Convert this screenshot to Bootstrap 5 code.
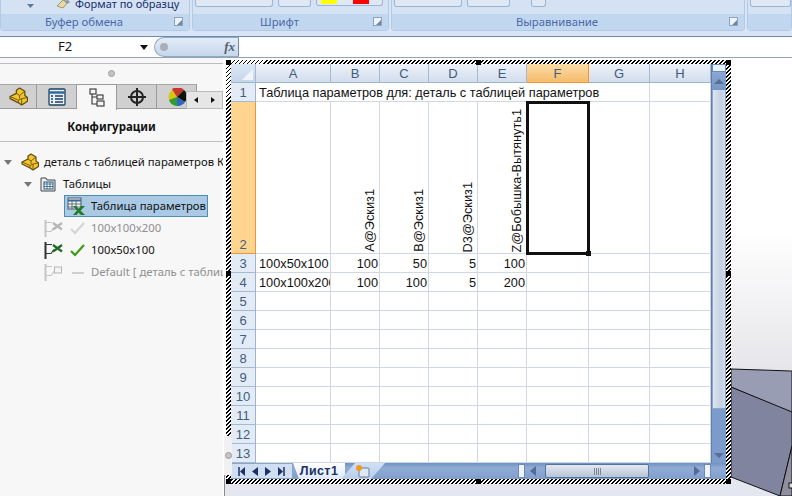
<!DOCTYPE html>
<html lang="ru">

<head>
    <meta charset="UTF-8">
    <meta name="viewport" content="width=device-width, initial-scale=1.0">
    <title>Таблица параметров</title>
    <link href="https://cdn.jsdelivr.net/npm/bootstrap@5.3.0/dist/css/bootstrap.min.css" rel="stylesheet">
    <style>
        html, body { width: 792px; height: 496px; overflow: hidden; }
        body { font-family: "Noto Sans", "Liberation Sans", sans-serif; font-size: 11.3px; color: #111; background: #fff; }

        /* ribbon */
        .rb-bar { height: 37px; background: #d6e4f5; border-bottom: 1px solid #6d8cab; }
        .rb-group { height: 31px; margin-right: 2px; background: #d4e2f4; border: 1px solid #b3cae4; border-top: 0; border-radius: 0 0 4px 4px; }
        .rb-top { height: 14px; gap: 5px; padding-left: 2px; }
        .rb-btn { height: 7px; background: #dfe9f6; border: 1px solid #9db5d2; border-top: 0; border-radius: 0 0 3px 3px; }
        .rb-label { height: 16px; background: #c1d7ef; color: #4a68a8; font-size: 11.3px; line-height: 16px; text-align: center; padding-right: 22px; }
        .rb-launch { right: 6px; top: 3px; width: 9px; height: 9px; border: 1px solid #8ea3bd; background: #eef3fa; }
        .rb-launch::after { content: ""; position: absolute; right: 0; bottom: 0; width: 5px; height: 5px; background: #6f88a8; clip-path: polygon(100% 0, 100% 100%, 0 100%); }
        .rb-brush { font-size: 11px; color: #16306e; line-height: 8px; white-space: nowrap; }
        .swatch-y { width: 16px; height: 4px; background: #ff0; }
        .swatch-r { width: 16px; height: 4px; background: #f00; }

        /* formula bar */
        .fx-bar { height: 21px; background: #fff; border-bottom: 1px solid #93a3b3; }
        .fx-name { width: 154px; font-size: 13px; }
        .fx-name span { margin-left: 58px; }
        .fx-drop { width: 0; height: 0; border: 4px solid transparent; border-top: 5px solid #111; border-bottom: 0; margin-left: 68px; }
        .fx-pill { width: 85px; background: linear-gradient(#e4ecf7, #c5d6ec); border: 1px solid #8ea9c9; border-right: 1px solid #6f8aaa; border-radius: 10px 0 0 10px; }
        .fx-dot { width: 8px; height: 8px; margin-left: 5px; border-radius: 50%; background: #a9afb8; }
        .fx-sign { margin-left: auto; margin-right: 3px; font: italic bold 13px "Liberation Serif", serif; color: #53606e; }

        /* left panel */
        .main-row { height: 438px; }
        .side-panel { width: 223px; background: #f7f7f7; }
        .side-top { height: 5px; border-bottom: 1px solid #bdbdbd; box-sizing: content-box; }
        .side-grip { height: 19px; }
        .grip-dot { width: 7px; height: 7px; border-radius: 50%; background: #c4c4c4; border: 1px solid #9d9d9d; }
        .tab-strip { height: 25px; border-bottom: 1px solid #9a9a9a; margin-top: 1px; }
        .tab-item { width: 40px; background: #d0d0d0; border-right: 1px solid #9a9a9a; border-top: 1px solid #a8a8a8; }
        .tab-item.tab-on { background: #f7f7f7; border-top-color: #9a9a9a; height: 26px; }
        .tab-more { right: 0; top: 7px; width: 37px; height: 18px; background: #e6e6e6; border: 1px solid #bbb; }
        .tab-more span { width: 0; height: 0; border: 3px solid transparent; }
        .tab-more .arr-l { border-right: 4px solid #111; border-left: 0; }
        .tab-more .arr-r { border-left: 4px solid #111; border-right: 0; }
        .side-title { height: 32px; line-height: 36px; font-weight: 700; text-align: center; border-bottom: 1px solid #bdbdbd; box-sizing: content-box; font-size: 11.5px; }
        .tree-list { padding-top: 9px; }
        .tree-row { height: 22px; white-space: nowrap; overflow: hidden; }
        .tree-row svg, .tree-sel svg { flex-shrink: 0; }
        .tree-tri { width: 0; height: 0; flex-shrink: 0; border: 4px solid transparent; border-top: 5px solid #777; border-bottom: 0; }
        .tree-off { color: #8f8f8f; }
        .tree-sel { background: #a9c9e4; border: 1px solid #4d8db8; height: 22px; width: 144px; margin-left: 64px; white-space: nowrap; }
        .tree-cfg { margin-left: 44px; }
        .cfg-off { color: #c4c4c4; }
        .cfg-on { color: #333; }
        .tree-gap { margin-left: 7px; }

        /* excel object */
        .work-area { flex: 1; background: #fff; }
        .work-foot { left: 1px; right: 0; bottom: 0; height: 22px; background: #e4e7f0; border-left: 1px solid #8a8a8a; }
        .ole-box { position: absolute; left: 3px; top: 2px; width: 505px; height: 424px; padding: 4px 5px 5px; background: repeating-linear-gradient(135deg, #000 0 1.4px, #fff 1.4px 2.83px); }
        .ole-handle { width: 5px; height: 5px; background: #000; }
        .ole-grip { left: 1px; top: 378px; width: 8px; height: 39px; background: #f1f1f1; border-radius: 0 2px 2px 0; }
        .xl-inner { height: 415px; background: #fff; }
        .xl-grid { width: 480px; height: 399px; }
        .xl-sheet { table-layout: fixed; width: 480px; border-collapse: separate; border-spacing: 0; font-family: "Liberation Sans", sans-serif; font-size: 12.75px; color: #111; }
        .xl-sheet > :not(caption) > * > * { padding: 2px 1px 0 3px; border: 0; border-right: 1px solid #d0d7e5; border-bottom: 1px solid #d0d7e5; height: 19px; line-height: 16px; overflow: hidden; white-space: nowrap; box-shadow: none; }
        .xl-sheet > :not(caption) > * > .xl-hd { background: linear-gradient(#eef2f8, #d2dded); border-right-color: #a4bad2; border-bottom-color: #9db4cd; color: #3f5d7d; text-align: center; padding: 2px 0 0; line-height: 16px; font-size: 13px; }
        .xl-sheet > :not(caption) > * > .xl-rw { background: #e3ebf6; border-right-color: #9db4cd; border-bottom-color: #a4bad2; color: #3f5d7d; text-align: center; padding: 2px 0 0; font-size: 13px; }
        .xl-sheet > :not(caption) > * > .xl-hd-on { background: linear-gradient(#f9dba6, #f6bc6c); border-right-color: #f29536; border-bottom-color: #f29536; }
        .xl-sheet > :not(caption) > * > .xl-rw-on { background: #ffd48f; border-right-color: #f29536; border-bottom-color: #f29536; vertical-align: bottom; }
        .xl-sheet > :not(caption) > * > .xl-corner { background: linear-gradient(#dbe6f4, #c5d6ea); position: relative; }
        .corner-tri { right: 2px; bottom: 2px; width: 0; height: 0; border-left: 11px solid transparent; border-bottom: 11px solid #f1f5fb; }
        .xl-sheet > :not(caption) > .row-tall > * { height: 152px; vertical-align: bottom; }
        .xl-sheet > :not(caption) > * > .xl-cur { position: relative; outline: 3px solid #111; outline-offset: -2px; overflow: visible; }
        .cur-fill { right: -3px; bottom: -3px; width: 5px; height: 5px; background: #111; z-index: 2; }
        .xl-vert { display: block; margin-left: auto; margin-right: 1px; width: 15px; writing-mode: vertical-rl; transform: rotate(180deg); line-height: 15px; padding-top: 1px; }

        /* scrollbars */
        .xl-vbar { width: 15px; height: 399px; background: #7b9ccb; border-left: 1px solid #5d7eae; }
        .vbar-split { height: 8px; background: #e9f0f9; border: 1px solid #6c8cb8; }
        .vbar-up { height: 18px; background: linear-gradient(#8aa8d2, #7496c6); }
        .vbar-up i, .vbar-dn i { width: 0; height: 0; border: 5px solid transparent; }
        .vbar-up i { border-bottom: 5px solid #5b6d94; border-top: 0; }
        .vbar-dn i { border-top: 5px solid #5b6d94; border-bottom: 0; }
        .vbar-thumb { height: 319px; background: linear-gradient(90deg, #dde5ef, #c3cfe1 70%, #d3dce9); border: 1px solid #8fa6c4; border-top: 0; }
        .vbar-dn { height: 54px; padding-bottom: 5px; }
        .xl-hbar { height: 16px; background: linear-gradient(#6e90c2, #90acd4 30%, #7f9fcb); }
        .sheet-nav { width: 62px; gap: 7px; background: #cfdef2; border: 1px solid #8ba5c5; border-left: 0; }
        .sheet-nav svg { display: block; }
        .sheet-tab { width: 52px; background: linear-gradient(#fff, #dce8f7); color: #1c3263; font: 700 12.5px "Liberation Sans", sans-serif; letter-spacing: .4px; clip-path: polygon(0 0, 100% 0, 100% 100%, 6px 100%); }
        .sheet-new { width: 44px; margin-left: -4px; background: linear-gradient(#cfe0f5, #b7cee9); clip-path: polygon(14px 0, 100% 0, calc(100% - 14px) 100%, 0 100%); }
        .hbar-fill { width: 133px; }
        .hbar-split { width: 7px; height: 14px; background: #eef3fa; border: 1px solid #6c8cb8; }
        .hbar-thumb { width: 104px; height: 14px; gap: 1px; background: linear-gradient(#e3e9f1, #b8c5d6); border: 1px solid #53749f; border-radius: 2px; }
        .hbar-thumb i { width: 1px; height: 7px; background: #7a8794; }
        .hbar-arr { width: 0; height: 0; border: 5px solid transparent; }
        .hbar-l { border-right: 6px solid #56699a; border-left: 0; margin: 0 9px 0 5px; }
        .hbar-r { border-left: 6px solid #56699a; border-right: 0; margin: 0 4px 0 45px; }
        .view-3d { right: 0; top: 0; }
    </style>
</head>

<body>
    <svg width="0" height="0" class="d-block">
        <symbol id="part" viewBox="0 0 18 18">
            <path d="M1 9 7 6V3l3-2 5 3v4l2.500 2v3.500L12 17l-3-2-8-4z" fill="#f3c52b" stroke="#5d4a12" stroke-width="1.200" stroke-linejoin="round"/>
            <path d="M7 6l3 2 5-4M10 8v3M1 9l8 3.500V15M9 12.500l3-1.500 5.500-1M12 11v6" fill="none" stroke="#6e5612" stroke-width=".9"/>
        </symbol>
        <symbol id="cfg" viewBox="0 0 19 19">
            <path d="M1.500 1v17" fill="none" stroke="currentColor" stroke-width="2"/>
            <path d="M2 3.500h6M2 12.500h5l3-4" fill="none" stroke="currentColor" stroke-width="1.100"/>
        </symbol>
    </svg>

    <div class="rb-bar d-flex">
        <div class="rb-group" style="width:190px">
            <div class="rb-top d-flex position-relative">
                <svg width="8" height="5" class="ms-4 mt-1"><path d="M0 0h7L3.500 4z" fill="#5b7aa8"/></svg>
                <svg width="14" height="10" class="ms-3"><path d="M1 6l6-6 5 2-5 6z" fill="#e9d9a3" stroke="#8a7a40" stroke-width=".7"/><path d="M8 1l4-1 2 2-3 2z" fill="#8d96a4"/></svg>
                <span class="rb-brush">Формат по образцу</span>
            </div>
            <div class="rb-label position-relative">Буфер обмена<span class="rb-launch position-absolute"></span></div>
        </div>
        <div class="rb-group" style="width:197px">
            <div class="rb-top d-flex">
                <span class="rb-btn" style="width:78px"></span>
                <span class="rb-btn" style="width:33px"></span>
                <span class="rb-btn d-flex ps-1 gap-3" style="width:67px;height:6px"><i class="swatch-y"></i><i class="swatch-r"></i></span>
            </div>
            <div class="rb-label position-relative">Шрифт<span class="rb-launch position-absolute"></span></div>
        </div>
        <div class="rb-group" style="width:354px">
            <div class="rb-top d-flex">
                <span class="rb-btn" style="width:68px"></span>
                <span class="rb-btn" style="width:43px"></span>
                <span class="rb-btn ms-3" style="width:15px"></span>
            </div>
            <div class="rb-label position-relative">Выравнивание<span class="rb-launch position-absolute"></span></div>
        </div>
        <div class="rb-group flex-grow-1 me-0">
            <div class="rb-top d-flex"><span class="rb-btn w-100"></span></div>
            <div class="rb-label"></div>
        </div>
    </div>

    <div class="fx-bar d-flex">
        <div class="fx-name d-flex align-items-center"><span>F2</span><i class="fx-drop"></i></div>
        <div class="fx-pill d-flex align-items-center"><i class="fx-dot"></i><span class="fx-sign">fx</span></div>
    </div>

    <div class="main-row d-flex">
        <div class="side-panel flex-shrink-0">
            <div class="side-top"></div>
            <div class="side-grip d-flex align-items-center justify-content-center"><i class="grip-dot"></i></div>
            <div class="tab-strip d-flex position-relative">
                <div class="tab-item d-flex align-items-center justify-content-center" style="width:37px">
                    <svg width="19" height="19"><use href="#part"/></svg>
                </div>
                <div class="tab-item d-flex align-items-center justify-content-center">
                    <svg width="18" height="18" viewBox="0 0 18 18"><rect x="1" y="1" width="16" height="16" rx="1" fill="#eaf1f8" stroke="#1d4263" stroke-width="1.3"/><path d="M1 4.500h16" stroke="#2f6a9c" stroke-width="2.500"/><path d="M3 8h2M7 8h8M3 11h2M7 11h8M3 14h2M7 14h8" stroke="#1d4263" stroke-width="1.300"/></svg>
                </div>
                <div class="tab-item tab-on d-flex align-items-center justify-content-center">
                    <svg width="16" height="19" viewBox="0 0 16 19"><g fill="#f4f4f4" stroke="#333" stroke-width="1.100"><rect x="1" y="1" width="6" height="5"/><rect x="8" y="7" width="6" height="4"/><rect x="8" y="13" width="7" height="5"/><path d="M3 6v10h5M3 9h5" fill="none"/></g></svg>
                </div>
                <div class="tab-item d-flex align-items-center justify-content-center">
                    <svg width="18" height="18" viewBox="0 0 18 18" fill="none" stroke="#222" stroke-width="2"><circle cx="9" cy="9" r="6"/><path d="M9 0v18M0 9h18"/></svg>
                </div>
                <div class="tab-item d-flex align-items-center justify-content-center">
                    <svg width="18" height="18" viewBox="0 0 18 18"><circle cx="9" cy="9" r="8.500" fill="#d7c21a"/><path d="M9 9 4 1a9 9 0 0 1 12 1z" fill="#c8352a"/><path d="M9 9l7-7a9 9 0 0 1 1 12z" fill="#111"/><path d="M9 9 1 12a9 9 0 0 0 8 6z" fill="#2e9b35"/><path d="M9 9l8 5a9 9 0 0 1-8 4z" fill="#2f68c4"/></svg>
                </div>
                <div class="tab-more position-absolute d-flex align-items-center justify-content-around"><span class="arr-l"></span><span class="arr-r"></span></div>
            </div>
            <div class="side-title">Конфигурации</div>
            <div class="tree-list">
                <div class="tree-row d-flex align-items-center">
                    <i class="tree-tri ms-1"></i>
                    <svg width="18" height="18" style="margin-left:9px"><use href="#part"/></svg>
                    <span style="margin-left:5px">деталь с таблицей параметров К</span>
                </div>
                <div class="tree-row d-flex align-items-center">
                    <i class="tree-tri" style="margin-left:24px"></i>
                    <svg width="16" height="16" viewBox="0 0 16 16" class="ms-2"><path d="M1 2h5l1 2h8v11H1z" fill="#eee" stroke="#444"/><rect x="4" y="6" width="9" height="7" fill="#fff" stroke="#245a85"/><path d="M4 8h9M7 6v7M10 6v7M4 10.500h9" stroke="#245a85" stroke-width=".8"/></svg>
                    <span style="margin-left:7px">Таблицы</span>
                </div>
                <div class="d-flex align-items-center tree-sel">
                    <svg width="20" height="19" viewBox="0 0 20 19" style="margin-left:2px"><rect x="1" y="1" width="13" height="11" fill="#eef2f6" stroke="#4d5964"/><path d="M1 3.500h13" stroke="#3a6b96" stroke-width="2"/><path d="M1 7h13M1 10h13M5 4v8M9 4v8" stroke="#4d5964" stroke-width=".8"/><path d="M6 9h3.500l2 3 2.500-3h4l-4.500 4.500L18 18h-4l-2.500-2.500L9.500 18H6l4-4.500z" fill="#1e7d24"/></svg>
                    <span class="ms-1">Таблица параметров</span>
                </div>
                <div class="tree-row d-flex align-items-center tree-off">
                    <svg width="19" height="19" class="tree-cfg cfg-off"><use href="#cfg"/><path d="M9 4l9 6.500M18 4 9 10.500" stroke="#b5b5b5" stroke-width="2.200"/></svg>
                    <svg width="15" height="13" class="tree-gap" viewBox="0 0 15 13"><path d="M1 7l4 4 9-10" fill="none" stroke="#d4d4d4" stroke-width="2.200"/></svg>
                    <span style="margin-left:6px">100x100x200</span>
                </div>
                <div class="tree-row d-flex align-items-center">
                    <svg width="19" height="19" class="tree-cfg cfg-on"><use href="#cfg"/><path d="M9 4l9 6.500M18 4 9 10.500" stroke="#1f6a24" stroke-width="2.200"/></svg>
                    <svg width="15" height="13" class="tree-gap" viewBox="0 0 15 13"><path d="M1 7l4 4 9-10" fill="none" stroke="#3d9a1f" stroke-width="2.200"/></svg>
                    <span style="margin-left:6px">100x50x100</span>
                </div>
                <div class="tree-row d-flex align-items-center tree-off">
                    <svg width="19" height="19" class="tree-cfg cfg-off"><use href="#cfg"/><rect x="10.500" y="4" width="7" height="6" fill="#f4f4f4" stroke="#b5b5b5"/></svg>
                    <svg width="15" height="13" class="tree-gap" viewBox="0 0 15 13"><path d="M2 7h12" stroke="#cfcfcf" stroke-width="2"/></svg>
                    <span style="margin-left:6px">Default [ деталь с таблиц</span>
                </div>
            </div>
        </div>

        <div class="work-area position-relative">
            <div class="work-foot position-absolute"></div>
            <svg class="view-3d position-absolute" width="61" height="438" viewBox="-2 0 61 438">
                <defs><linearGradient id="vg" x1="0" y1="0" x2="0" y2="1"><stop offset=".55" stop-color="#fff"/><stop offset="1" stop-color="#e6e6ea"/></linearGradient></defs>
                <rect x="-2" width="61" height="312" fill="url(#vg)"/>
                <path d="M-2 419 47 438H-2z" fill="#e4e7f0"/>
                <path d="M-2 311 59 313V355L-2 329z" fill="#999db3" stroke="#111"/>
                <path d="M-2 329 59 354V388L47 438-2 419z" fill="#81849e" stroke="#111"/>
                <path d="M59 388 47 438H59z" fill="#8f8f9f" stroke="#111"/>
                <rect x="56" y="425" width="4" height="5" fill="#ddd" stroke="#111"/>
            </svg>

            <div class="ole-box">
                <div class="xl-inner">
                    <div class="d-flex">
                        <div class="xl-grid">
                            <table class="table mb-0 xl-sheet">
                                <colgroup>
                                    <col style="width:25px"><col style="width:75px"><col style="width:49px"><col style="width:49px"><col style="width:49px"><col style="width:49px"><col style="width:62px"><col style="width:61px"><col style="width:61px">
                                </colgroup>
                                <thead>
                                    <tr>
                                        <th class="xl-hd xl-corner fw-normal"><i class="corner-tri position-absolute"></i></th>
                                        <th class="xl-hd fw-normal">A</th>
                                        <th class="xl-hd fw-normal">B</th>
                                        <th class="xl-hd fw-normal">C</th>
                                        <th class="xl-hd fw-normal">D</th>
                                        <th class="xl-hd fw-normal">E</th>
                                        <th class="xl-hd xl-hd-on fw-normal">F</th>
                                        <th class="xl-hd fw-normal">G</th>
                                        <th class="xl-hd fw-normal">H</th>
                                    </tr>
                                </thead>
                                <tbody id="sheetBody">
                                    <tr>
                                        <td class="xl-rw">1</td>
                                        <td colspan="7">Таблица параметров для: деталь с таблицей параметров</td>
                                        <td></td>
                                    </tr>
                                    <tr class="row-tall">
                                        <td class="xl-rw xl-rw-on">2</td>
                                        <td></td>
                                        <td><span class="xl-vert">A@Эскиз1</span></td>
                                        <td><span class="xl-vert">B@Эскиз1</span></td>
                                        <td><span class="xl-vert">D3@Эскиз1</span></td>
                                        <td><span class="xl-vert">Z@Бобышка-Вытянуть1</span></td>
                                        <td class="xl-cur"><i class="cur-fill position-absolute"></i></td>
                                        <td></td>
                                        <td></td>
                                    </tr>
                                    <tr>
                                        <td class="xl-rw">3</td>
                                        <td>100x50x100</td>
                                        <td class="text-end">100</td>
                                        <td class="text-end">50</td>
                                        <td class="text-end">5</td>
                                        <td class="text-end">100</td>
                                        <td></td><td></td><td></td>
                                    </tr>
                                    <tr>
                                        <td class="xl-rw">4</td>
                                        <td>100x100x200</td>
                                        <td class="text-end">100</td>
                                        <td class="text-end">100</td>
                                        <td class="text-end">5</td>
                                        <td class="text-end">200</td>
                                        <td></td><td></td><td></td>
                                    </tr>
                                </tbody>
                            </table>
                        </div>
                        <div class="xl-vbar">
                            <div class="vbar-split"></div>
                            <div class="vbar-up d-flex align-items-center justify-content-center"><i></i></div>
                            <div class="vbar-thumb"></div>
                            <div class="vbar-dn d-flex align-items-end justify-content-center"><i></i></div>
                        </div>
                    </div>
                    <div class="xl-hbar d-flex align-items-center">
                        <div class="sheet-nav d-flex align-items-center justify-content-center h-100">
                            <svg width="7" height="9"><path d="M1 0v9" stroke="#1c3263" stroke-width="1.500"/><path d="M7 0v9L2 4.500z" fill="#1c3263"/></svg>
                            <svg width="6" height="9"><path d="M6 0v9L0 4.500z" fill="#1c3263"/></svg>
                            <svg width="6" height="9"><path d="M0 0v9l6-4.500z" fill="#1c3263"/></svg>
                            <svg width="7" height="9"><path d="M0 0v9l5-4.500z" fill="#1c3263"/><path d="M6 0v9" stroke="#1c3263" stroke-width="1.500"/></svg>
                        </div>
                        <div class="sheet-tab d-flex align-items-center justify-content-center h-100">Лист1</div>
                        <div class="sheet-new d-flex align-items-center justify-content-center h-100">
                            <svg width="16" height="14" viewBox="0 0 16 14"><rect x="4" y="4" width="10" height="9" rx="1" fill="#dfe8f4" stroke="#6d7f9a"/><circle cx="4" cy="4" r="3" fill="#ef9a1e"/></svg>
                        </div>
                        <div class="hbar-fill"></div>
                        <div class="hbar-split"></div>
                        <i class="hbar-arr hbar-l"></i>
                        <div class="hbar-thumb d-flex align-items-center justify-content-center"><i></i><i></i><i></i><i></i></div>
                        <i class="hbar-arr hbar-r"></i>
                        <div class="hbar-split"></div>
                    </div>
                </div>
                <span class="ole-handle position-absolute" style="left:0;top:0"></span>
                <span class="ole-handle position-absolute" style="left:250px;top:0"></span>
                <span class="ole-handle position-absolute" style="right:0;top:0"></span>
                <span class="ole-handle position-absolute" style="left:0;top:211px"></span>
                <span class="ole-handle position-absolute" style="right:0;top:211px"></span>
                <span class="ole-handle position-absolute" style="left:0;bottom:0"></span>
                <span class="ole-handle position-absolute" style="left:250px;bottom:0"></span>
                <span class="ole-handle position-absolute" style="right:0;bottom:0"></span>
            </div>
            <div class="ole-grip position-absolute d-flex align-items-center justify-content-center"><i class="grip-dot"></i></div>
        </div>
    </div>

    <script src="https://cdn.jsdelivr.net/npm/bootstrap@5.3.0/dist/js/bootstrap.bundle.min.js"></script>
    <script>
        // empty numbered rows 5..13
        const sheetBody = document.getElementById('sheetBody');
        for (let n = 5; n <= 13; n++) {
            sheetBody.innerHTML += `<tr><td class="xl-rw">${n}</td>${'<td></td>'.repeat(8)}</tr>`;
        }
    </script>
</body>

</html>
